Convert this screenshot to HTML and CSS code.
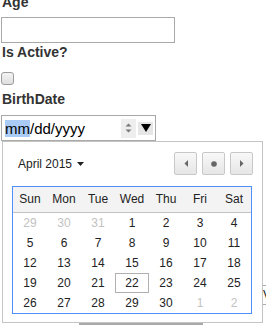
FILE: index.html
```html
<!DOCTYPE html>
<html>
<head>
<meta charset="utf-8">
<link rel="stylesheet" href="styles.css">
</head>
<body>
<div class="page">
  <div class="label first">Age</div>
  <input class="text-input" type="text">
  <div class="label after-input">Is Active?</div>
  <input class="check" type="checkbox">
  <div class="label after-check">BirthDate</div>
  <div class="date-wrap">
    <div class="date-input">
      <span class="seg sel">mm</span><span class="seg">/dd/yyyy</span>
      <span class="spin">
        <svg width="7" height="12" viewBox="0 0 7 12"><path d="M3.5 1.5 L6.5 4.5 L0.5 4.5 Z" fill="#777"/><path d="M0.5 7.5 L6.5 7.5 L3.5 10.5 Z" fill="#777"/></svg>
      </span>
      <span class="drop">
        <svg width="10" height="8" viewBox="0 0 10 8"><path d="M0 0 L10 0 L5 8 Z" fill="#000"/></svg>
      </span>
    </div>
    <div class="picker">
      <div class="picker-head">
        <div class="month">April 2015 <svg class="caret" width="7" height="4" viewBox="0 0 7 4"><path d="M0 0 L7 0 L3.5 4 Z" fill="#222"/></svg></div>
        <div class="nav">
          <span class="btn"><svg width="4" height="7" viewBox="0 0 4 7"><path d="M4 0 L4 7 L0.5 3.5 Z" fill="#666"/></svg></span>
          <span class="btn"><svg width="6" height="6" viewBox="0 0 6 6"><circle cx="3" cy="3" r="2.8" fill="#666"/></svg></span>
          <span class="btn"><svg width="4" height="7" viewBox="0 0 4 7"><path d="M0 0 L0 7 L3.5 3.5 Z" fill="#666"/></svg></span>
        </div>
      </div>
      <div class="cal">
        <div class="wk">Sun</div><div class="wk">Mon</div><div class="wk">Tue</div><div class="wk">Wed</div><div class="wk">Thu</div><div class="wk">Fri</div><div class="wk">Sat</div>
        <div class="d o">29</div><div class="d o">30</div><div class="d o">31</div><div class="d">1</div><div class="d">2</div><div class="d">3</div><div class="d">4</div>
        <div class="d">5</div><div class="d">6</div><div class="d">7</div><div class="d">8</div><div class="d">9</div><div class="d">10</div><div class="d">11</div>
        <div class="d">12</div><div class="d">13</div><div class="d">14</div><div class="d">15</div><div class="d">16</div><div class="d">17</div><div class="d">18</div>
        <div class="d">19</div><div class="d">20</div><div class="d">21</div><div class="d today">22</div><div class="d">23</div><div class="d">24</div><div class="d">25</div>
        <div class="d">26</div><div class="d">27</div><div class="d">28</div><div class="d">29</div><div class="d">30</div><div class="d o">1</div><div class="d o">2</div>
      </div>
    </div>
  </div>
  <div class="behind">
    <div class="ghost-input">Value</div>
  </div>
  <div class="ghost-bar"></div>
</div>
</body>
</html>
```

FILE: styles.css
```css
html, body {
  margin: 0;
  padding: 0;
  background: #fff;
  overflow: hidden;
}
body {
  width: 266px;
  height: 332px;
  font-family: "Liberation Sans", Arial, sans-serif;
}
.page {
  padding-left: 1px;
}
.label {
  font-weight: bold;
  font-size: 14px;
  line-height: 16px;
  color: #333;
  padding-left: 1px;
}
.label.first { margin-top: -6px; }
.label.after-input { margin-top: 1px; }
.label.after-check { margin-top: 6px; }
.text-input {
  display: block;
  box-sizing: border-box;
  margin: 7px 0 0 0;
  width: 174px;
  height: 26px;
  border: 1px solid #a9a9a9;
  padding: 0 3px;
  font: 13px "Liberation Sans", Arial, sans-serif;
  outline: none;
}
.check {
  display: block;
  -webkit-appearance: none;
  appearance: none;
  box-sizing: border-box;
  margin: 12px 0 0 0;
  width: 13px;
  height: 13px;
  border: 1px solid #9c9c9c;
  border-radius: 3px;
  background: linear-gradient(#f4f4f4, #dedede);
}
.date-wrap {
  position: relative;
  margin-top: 8px;
  width: 155px;
}
.date-input {
  box-sizing: border-box;
  width: 155px;
  height: 26px;
  border: 1px solid #a9a9a9;
  display: flex;
  align-items: center;
  padding-left: 3px;
  font-size: 15px;
  color: #000;
}
.seg.sel {
  background: #a9cbf5;
  line-height: 17px;
}
.spin {
  margin-left: auto;
  width: 15px;
  height: 19px;
  background: #eeeeee;
  display: flex;
  align-items: center;
  justify-content: center;
}
.drop {
  width: 15px;
  height: 13px;
  margin: 0 2px 0 2px;
  background: #e6e6e6;
  display: flex;
  align-items: center;
  justify-content: center;
}
.picker {
  position: absolute;
  top: 100%;
  left: 1px;
  z-index: 2;
  box-sizing: border-box;
  width: 261px;
  height: 182px;
  background: #fff;
  border: 1px solid #c4c4c4;
  padding: 10px 9px 0 9px;
}
.picker-head {
  display: flex;
  align-items: center;
  justify-content: space-between;
  height: 23px;
}
.month {
  padding-left: 6px;
  font-size: 12px;
  color: #222;
  display: flex;
  align-items: center;
  gap: 5px;
  margin-top: 1px;
}
.nav {
  display: flex;
  gap: 5px;
}
.btn {
  box-sizing: border-box;
  width: 23px;
  height: 23px;
  border: 1px solid #c8c8c8;
  border-radius: 2px;
  background: linear-gradient(#f8f8f8, #e6e6e6);
  display: flex;
  align-items: center;
  justify-content: center;
}
.cal {
  margin-top: 11px;
  width: 240px;
  box-sizing: border-box;
  border: 1px solid #4d8ef7;
  display: grid;
  grid-template-columns: repeat(7, 34px);
  grid-auto-rows: 20px;
  font-size: 12px;
  color: #222;
}
.wk {
  height: 25px;
  line-height: 25px;
  text-align: center;
  background: #f3f3f3;
  border-bottom: 1px solid #c3c3c3;
  align-self: start;
}
.cal > .wk { grid-row: 1; }
.cal { grid-template-rows: 26px; }
.d {
  box-sizing: border-box;
  line-height: 20px;
  text-align: center;
}
.d.o { color: #c2c2c2; }
.d.today {
  border: 1px solid #b0b0b0;
  line-height: 18px;
}
.behind {
  margin-top: 144px;
  display: flex;
}
.ghost-input {
  box-sizing: border-box;
  margin-left: 261px;
  flex: none;
  width: 120px;
  height: 20px;
  border-top: 1px solid #aaa;
  border-bottom: 1px solid #aaa;
  font-size: 12px;
  line-height: 18px;
  padding-left: 1px;
  color: #222;
}
.ghost-bar {
  margin-top: 17px;
  margin-left: 78px;
  width: 124px;
  height: 3px;
  background: #a9a9a9;
}
```
